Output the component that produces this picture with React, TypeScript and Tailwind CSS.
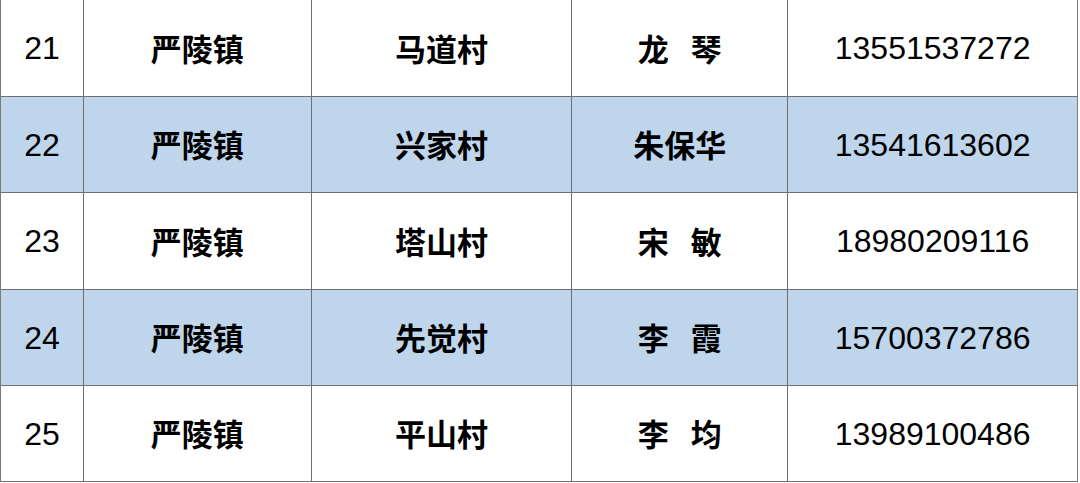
import React from "react";

const rows = [
  { no: "21", town: "严陵镇", village: "马道村", name: ["龙", "琴"], phone: "13551537272", blue: false, h: "h-[97px]" },
  { no: "22", town: "严陵镇", village: "兴家村", name: ["朱保华"], phone: "13541613602", blue: true, h: "h-[96px]" },
  { no: "23", town: "严陵镇", village: "塔山村", name: ["宋", "敏"], phone: "18980209116", blue: false, h: "h-[97px]" },
  { no: "24", town: "严陵镇", village: "先觉村", name: ["李", "霞"], phone: "15700372786", blue: true, h: "h-[96px]" },
  { no: "25", town: "严陵镇", village: "平山村", name: ["李", "均"], phone: "13989100486", blue: false, h: "h-[96px]" },
];

const numCls = "font-['Liberation_Sans',Arial,sans-serif] text-[32px]";
const cjkCls = "font-['Noto_Sans_CJK_SC','Noto_Sans',sans-serif] text-[31px] font-bold";

export default function App() {
  return (
    <div className="w-[1080px] h-[483px] bg-white">
      <div className="w-[1078px] border-l border-r border-[#7a7a7a] text-black">
        {rows.map((r) => (
          <div
            key={r.no}
            className={`flex ${r.h} border-b border-[#6f6f6f] ${r.blue ? "bg-[#bed5ec]" : "bg-white"}`}
          >
            <div className={`w-[83px] border-r border-[#6f6f6f] flex items-center justify-center ${numCls}`}>
              {r.no}
            </div>
            <div className={`w-[228px] border-r border-[#6f6f6f] flex items-center justify-center ${cjkCls}`}>
              {r.town}
            </div>
            <div className={`w-[261px] border-r border-[#6f6f6f] flex items-center justify-center ${cjkCls}`}>
              {r.village}
            </div>
            <div className={`w-[216px] border-r border-[#6f6f6f] flex items-center justify-center gap-[22px] ${cjkCls}`}>
              {r.name.map((n, i) => (
                <span key={i}>{n}</span>
              ))}
            </div>
            <div className={`w-[289px] flex items-center justify-center ${numCls}`}>
              {r.phone}
            </div>
          </div>
        ))}
      </div>
    </div>
  );
}
